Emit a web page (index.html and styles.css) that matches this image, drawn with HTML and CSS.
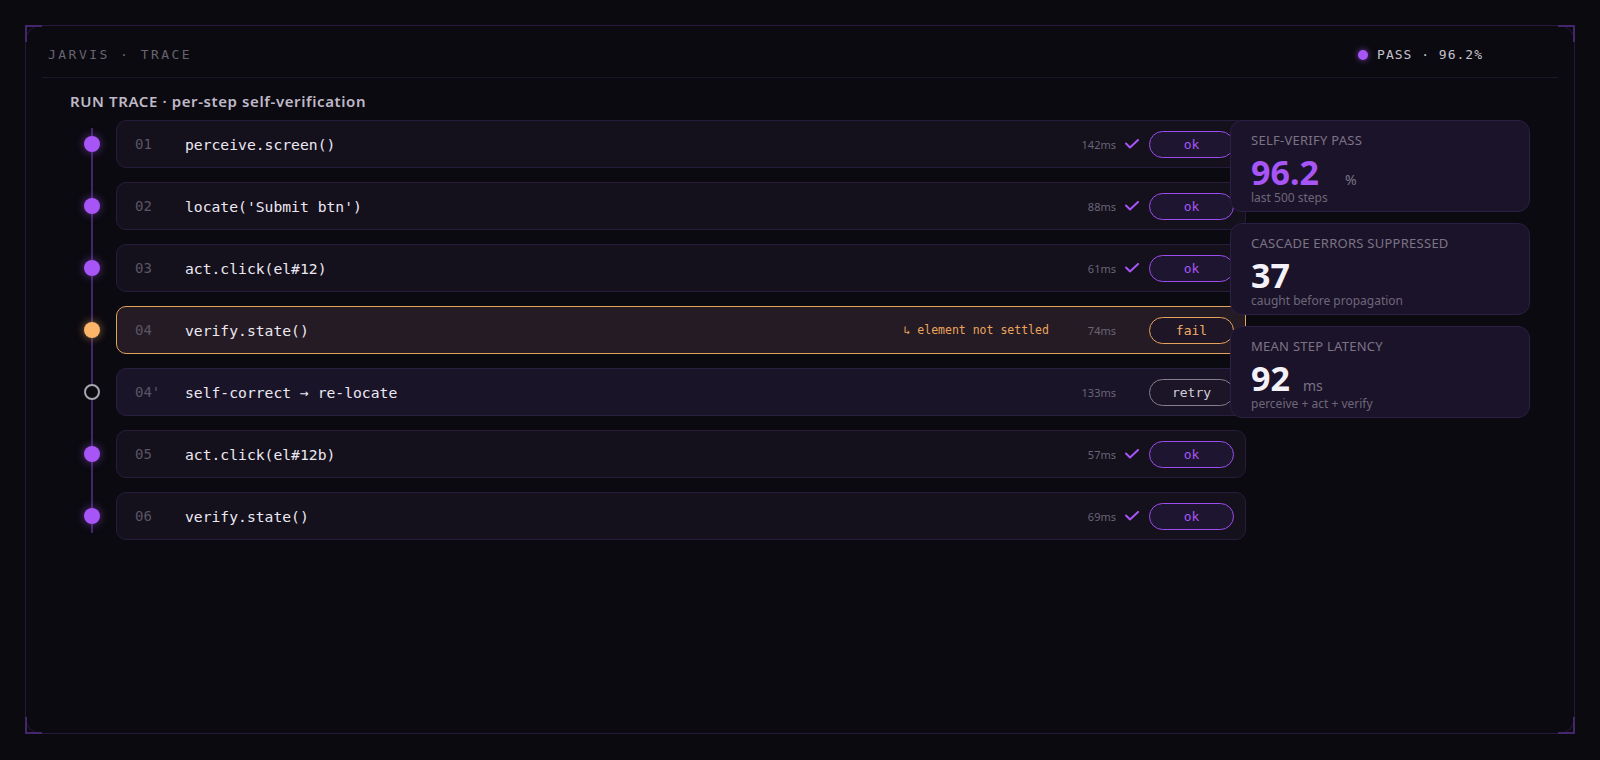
FILE: index.html
```html
<!DOCTYPE html>
<html lang="en">
<head>
<meta charset="utf-8">
<title>Jarvis Trace</title>
<link rel="stylesheet" href="styles.css">
</head>
<body>
<div class="frame">
  <span class="corner tl"></span><span class="corner tr"></span><span class="corner bl"></span><span class="corner br"></span>
  <header class="topbar">
    <div class="brand">JARVIS · TRACE</div>
    <div class="status"><span class="status-dot"></span>PASS · 96.2%</div>
  </header>
  <main class="main">
    <h2 class="title">RUN TRACE · per-step self-verification</h2>
    <div class="layout">
      <div class="trace">
        <div class="rail-line"></div>
        <div class="step">
          <div class="rail"><span class="dot"></span></div>
          <div class="row">
            <span class="num">01</span><span class="code">perceive.screen()</span>
            <span class="ms">142ms</span>
            <svg class="check" viewBox="0 0 14 10" width="14" height="10"><path d="M1 4.5 L5 8.5 L13 1"/></svg>
            <span class="pill ok">ok</span>
          </div>
        </div>
        <div class="step">
          <div class="rail"><span class="dot"></span></div>
          <div class="row">
            <span class="num">02</span><span class="code">locate('Submit btn')</span>
            <span class="ms">88ms</span>
            <svg class="check" viewBox="0 0 14 10" width="14" height="10"><path d="M1 4.5 L5 8.5 L13 1"/></svg>
            <span class="pill ok">ok</span>
          </div>
        </div>
        <div class="step">
          <div class="rail"><span class="dot"></span></div>
          <div class="row">
            <span class="num">03</span><span class="code">act.click(el#12)</span>
            <span class="ms">61ms</span>
            <svg class="check" viewBox="0 0 14 10" width="14" height="10"><path d="M1 4.5 L5 8.5 L13 1"/></svg>
            <span class="pill ok">ok</span>
          </div>
        </div>
        <div class="step">
          <div class="rail"><span class="dot warn"></span></div>
          <div class="row fail-row">
            <span class="num">04</span><span class="code">verify.state()</span>
            <span class="note">↳ element not settled</span>
            <span class="ms">74ms</span>
            <svg class="check hidden" viewBox="0 0 14 10" width="14" height="10"><path d="M1 4.5 L5 8.5 L13 1"/></svg>
            <span class="pill fail">fail</span>
          </div>
        </div>
        <div class="step">
          <div class="rail"><span class="dot hollow"></span></div>
          <div class="row retry-row">
            <span class="num">04'</span><span class="code">self-correct → re-locate</span>
            <span class="ms">133ms</span>
            <svg class="check hidden" viewBox="0 0 14 10" width="14" height="10"><path d="M1 4.5 L5 8.5 L13 1"/></svg>
            <span class="pill retry">retry</span>
          </div>
        </div>
        <div class="step">
          <div class="rail"><span class="dot"></span></div>
          <div class="row">
            <span class="num">05</span><span class="code">act.click(el#12b)</span>
            <span class="ms">57ms</span>
            <svg class="check" viewBox="0 0 14 10" width="14" height="10"><path d="M1 4.5 L5 8.5 L13 1"/></svg>
            <span class="pill ok">ok</span>
          </div>
        </div>
        <div class="step">
          <div class="rail"><span class="dot"></span></div>
          <div class="row">
            <span class="num">06</span><span class="code">verify.state()</span>
            <span class="ms">69ms</span>
            <svg class="check" viewBox="0 0 14 10" width="14" height="10"><path d="M1 4.5 L5 8.5 L13 1"/></svg>
            <span class="pill ok">ok</span>
          </div>
        </div>
      </div>
      <aside class="stats">
        <div class="card">
          <div class="label">SELF-VERIFY PASS</div>
          <div class="value purple">96.2<span class="unit wide">%</span></div>
          <div class="sub">last 500 steps</div>
        </div>
        <div class="card">
          <div class="label">CASCADE ERRORS SUPPRESSED</div>
          <div class="value">37</div>
          <div class="sub">caught before propagation</div>
        </div>
        <div class="card">
          <div class="label">MEAN STEP LATENCY</div>
          <div class="value">92<span class="unit">ms</span></div>
          <div class="sub">perceive + act + verify</div>
        </div>
      </aside>
    </div>
  </main>
</div>
</body>
</html>
```

FILE: styles.css
```css
* { box-sizing: border-box; }
html, body { margin: 0; }
body {
  background: #0b0a0f;
  padding: 25px;
  height: 760px;
  font-family: "Noto Sans", "Open Sans", sans-serif;
  color: #e8e4ee;
}
.frame {
  position: relative;
  height: 709px;
  border: 1px solid #26183e;
  border-radius: 16px;
  background: #0b0a10;
  padding: 0 16px;
}
.corner {
  position: absolute;
  width: 17px;
  height: 17px;
  border: 0 solid #43266c;
}
.corner.tl { top: -1px; left: -1px; border-top-width: 2px; border-left-width: 2px; }
.corner.tr { top: -1px; right: -1px; border-top-width: 2px; border-right-width: 2px; }
.corner.bl { bottom: -1px; left: -1px; border-bottom-width: 2px; border-left-width: 2px; }
.corner.br { bottom: -1px; right: -1px; border-bottom-width: 2px; border-right-width: 2px; }

.topbar {
  display: flex;
  justify-content: space-between;
  align-items: center;
  padding: 20px 6px 13px;
  border-bottom: 1px solid #1d1529;
  font-family: "DejaVu Sans Mono", monospace;
  line-height: 18px;
}
.brand {
  font-size: 13px;
  letter-spacing: 0.19em;
  color: #68636f;
}
.status {
  display: flex;
  align-items: center;
  font-size: 13px;
  letter-spacing: 1px;
  color: #c6c1cd;
  margin-right: 69px;
}
.status-dot {
  width: 10px;
  height: 10px;
  border-radius: 50%;
  background: #a855f7;
  box-shadow: 0 0 6px rgba(168, 85, 247, 0.7);
  margin-right: 9px;
}

.main { padding: 0 0 0 26px; }
.title {
  margin: 13px 0 9px 2px;
  font-size: 15px;
  line-height: 20px;
  font-weight: 600;
  letter-spacing: 0.04em;
  color: #bfb9c7;
}
.layout {
  display: flex;
  align-items: flex-start;
}
.trace {
  position: relative;
  width: 1178px;
  display: flex;
  flex-direction: column;
  gap: 14px;
}
.rail-line {
  position: absolute;
  left: 23px;
  width: 2px;
  top: 8px;
  bottom: 7px;
  background: #42266a;
}
.step {
  display: flex;
  align-items: center;
  height: 48px;
}
.rail {
  width: 48px;
  display: flex;
  justify-content: center;
  position: relative;
}
.dot {
  width: 16px;
  height: 16px;
  border-radius: 50%;
  background: #a855f7;
  box-shadow: 0 0 8px rgba(168, 85, 247, 0.55);
}
.dot.warn {
  background: #fdb56a;
  box-shadow: 0 0 8px rgba(253, 181, 106, 0.55);
}
.dot.hollow {
  background: #0b0a10;
  border: 2px solid #a9a4b1;
  box-shadow: none;
}
.row {
  flex: 1;
  height: 48px;
  display: flex;
  align-items: center;
  padding: 0 11px 0 18px;
  background: #14101c;
  border: 1px solid #281c3d;
  border-radius: 10px;
}
.row.fail-row {
  background: #241b24;
  border: 1.5px solid #e3a25c;
}
.row.retry-row {
  background: #1a1428;
  border-color: #2a1f40;
}
.num {
  width: 50px;
  font-family: "DejaVu Sans Mono", monospace;
  font-size: 14px;
  color: #5a5565;
}
.code {
  flex: 1;
  font-family: "DejaVu Sans Mono", monospace;
  font-size: 14.7px;
  color: #ece8f2;
}
.note {
  font-family: "DejaVu Sans Mono", monospace;
  font-size: 11.5px;
  color: #eca55c;
  margin-right: 39px;
}
.ms {
  font-size: 11px;
  color: #6b6478;
}
.check {
  margin: 0 10px 0 9px;
  fill: none;
  stroke: #a855f7;
  stroke-width: 2;
  stroke-linecap: round;
  stroke-linejoin: round;
}
.check.hidden { visibility: hidden; }
.pill {
  width: 85px;
  height: 27px;
  border-radius: 14px;
  display: flex;
  align-items: center;
  justify-content: center;
  font-family: "DejaVu Sans Mono", monospace;
  font-size: 13px;
  background: #1e1530;
  border: 1.5px solid #9d4ded;
}
.pill.ok { color: #a855f7; }
.pill.fail { color: #f0ad62; border-color: #e6a35b; background: #1e1626; }
.pill.retry { color: #d2cdd8; border-color: #85808d; background: #1c1528; }

.stats {
  position: relative;
  width: 300px;
  margin-left: -16px;
  display: flex;
  flex-direction: column;
  gap: 11px;
}
.card {
  height: 92px;
  padding: 11px 20px 0;
  background: #1b1329;
  border: 1px solid #2b1f43;
  border-radius: 12px;
}
.label {
  font-size: 13px;
  line-height: 16px;
  letter-spacing: 0.02em;
  color: #7b7485;
}
.value {
  margin-top: 7px;
  font-size: 34px;
  line-height: 34px;
  font-weight: 700;
  color: #f4f1f8;
}
.value.purple { color: #a855f7; }
.unit {
  font-size: 14px;
  line-height: 1;
  font-weight: 400;
  color: #7a7386;
  margin-left: 13px;
}
.unit.wide { margin-left: 26px; }
.sub {
  margin-top: 1px;
  font-size: 12px;
  line-height: 16px;
  color: #6e6779;
}
```
